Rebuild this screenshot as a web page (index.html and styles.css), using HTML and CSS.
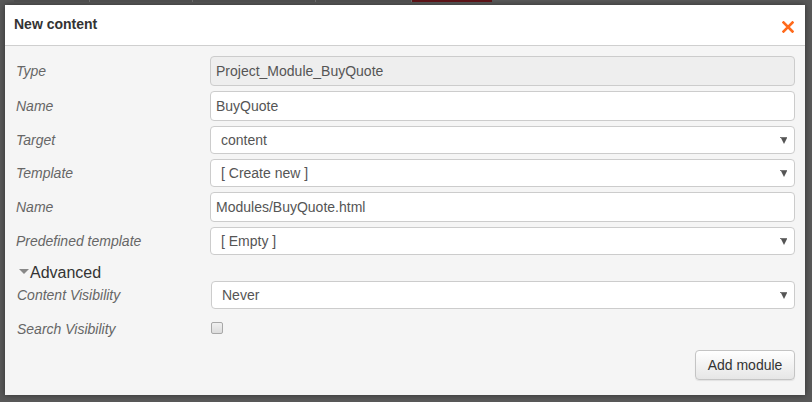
FILE: index.html
```html
<!DOCTYPE html>
<html>
<head>
<meta charset="utf-8">
<link rel="stylesheet" href="styles.css">
</head>
<body>
<div class="backdrop-strip">
  <div class="strip-tabs">
    <span class="strip-tab t1"></span><span class="strip-tab t2"></span><span class="strip-tab t3"></span><span class="strip-tab t4"></span>
  </div>
  <span class="strip-red"></span>
</div>
<div class="dialog">
  <div class="dialog-header">
    <h1 class="dialog-title">New content</h1>
    <span class="close-btn" aria-label="Close">
      <svg width="12" height="12" viewBox="0 0 12 12"><path d="M1.5 1.5 L10.5 10.5 M10.5 1.5 L1.5 10.5" stroke="#ff6a1c" stroke-width="2.6" stroke-linecap="square" fill="none"/></svg>
    </span>
  </div>
  <div class="dialog-body">
    <div class="form-grid">
      <label class="f-label">Type</label>
      <input class="f-input disabled" type="text" value="Project_Module_BuyQuote" disabled>

      <label class="f-label">Name</label>
      <input class="f-input" type="text" value="BuyQuote">

      <label class="f-label">Target</label>
      <div class="f-select"><span>content</span></div>

      <label class="f-label">Template</label>
      <div class="f-select"><span>[ Create new ]</span></div>

      <label class="f-label">Name</label>
      <input class="f-input" type="text" value="Modules/BuyQuote.html">

      <label class="f-label">Predefined template</label>
      <div class="f-select"><span>[ Empty ]</span></div>
    </div>

    <div class="advanced-toggle"><span class="adv-caret"></span>Advanced</div>

    <div class="form-grid adv-grid">
      <label class="f-label">Content Visibility</label>
      <div class="f-select"><span>Never</span></div>

      <label class="f-label search-label">Search Visibility</label>
      <div class="check-cell"><span class="f-check"></span></div>
    </div>

    <div class="dialog-footer">
      <button class="btn" type="button">Add module</button>
    </div>
  </div>
</div>
</body>
</html>
```

FILE: styles.css
```css
* { box-sizing: border-box; }
html, body { margin: 0; padding: 0; }
body {
  width: 812px;
  height: 402px;
  background: #595959;
  font-family: "Liberation Sans", Arial, Helvetica, sans-serif;
  overflow: hidden;
  position: relative;
}
.backdrop-strip {
  height: 5px;
  display: flex;
  align-items: flex-start;
}
.strip-tabs {
  display: flex;
  margin-left: 14px;
  height: 2px;
  width: 398px;
}
.strip-tab {
  height: 2px;
  background: #4d4d4d;
  border-right: 1px solid #6a6a6a;
}
.t1 { width: 76px; }
.t2 { width: 103px; }
.t3 { width: 123px; }
.t4 { width: 96px; }
.strip-red {
  display: block;
  width: 80px;
  height: 2px;
  background: #5b1216;
}
.dialog {
  margin-left: 5px;
  width: 800px;
  height: 390px;
  background: #f5f5f5;
  box-shadow: 0 0 6px rgba(0,0,0,0.45);
  display: flex;
  flex-direction: column;
}
.dialog-header {
  height: 41px;
  background: #fff;
  border-bottom: 1px solid #cfcfcf;
  display: flex;
  align-items: center;
  justify-content: space-between;
  padding: 0 11px 0 9px;
}
.dialog-title {
  margin: 0;
  font-size: 14px;
  font-weight: bold;
  color: #333;
  position: relative;
  top: -1px;
}
.close-btn {
  display: flex;
  width: 12px;
  height: 12px;
  position: relative;
  top: 2px;
}
.dialog-body {
  flex: 1;
  padding: 10px 10px 0 11px;
  display: flex;
  flex-direction: column;
}
.form-grid {
  display: grid;
  grid-template-columns: 194px 1fr;
  row-gap: 5px;
  align-items: center;
}
.f-label {
  font-size: 14px;
  font-style: italic;
  color: #666;
}
.f-input {
  height: 30px;
  width: 100%;
  border: 1px solid #cccccc;
  border-radius: 4px;
  background: #fff;
  padding: 0 5px;
  font-family: "Liberation Sans", Arial, sans-serif;
  font-size: 14px;
  color: #555;
  outline: none;
}
.f-input.disabled {
  background: #eeeeee;
  color: #555;
  -webkit-text-fill-color: #555;
  opacity: 1;
}
.f-select {
  position: relative;
  height: 28px;
  border: 1px solid #cccccc;
  border-radius: 4px;
  background: #fff;
  padding: 0 10px;
  font-size: 14px;
  color: #555;
  display: flex;
  align-items: center;
}
.f-select::after {
  content: "";
  position: absolute;
  right: 7px;
  top: 50%;
  margin-top: -2px;
  border-left: 3.5px solid transparent;
  border-right: 3.5px solid transparent;
  border-top: 6px solid #555;
}
.f-select::before {
  content: "";
  position: absolute;
  right: 7px;
  top: 50%;
  margin-top: -3px;
  width: 7px;
  height: 1px;
  background: #777;
}
.advanced-toggle {
  margin-top: 5px;
  height: 21px;
  line-height: 21px;
  font-size: 16px;
  color: #333;
  display: flex;
  align-items: center;
  padding-left: 3px;
  position: relative;
  top: 2px;
}
.adv-caret {
  width: 0;
  height: 0;
  border-left: 5px solid transparent;
  border-right: 5px solid transparent;
  border-top: 5px solid #888;
  margin-right: 1px;
  position: relative;
  top: -1px;
}
.adv-grid {
  padding-left: 1px;
  row-gap: 5px;
}
.search-label {
  height: 30px;
  display: flex;
  align-items: center;
}
.check-cell {
  height: 30px;
  padding-top: 8px;
}
.f-check {
  display: block;
  width: 12px;
  height: 12px;
  border: 1px solid #a8a8a8;
  border-radius: 2px;
  background: linear-gradient(#f0f0f0, #dcdcdc);
}
.dialog-footer {
  display: flex;
  justify-content: flex-end;
  margin-top: 6px;
  padding-right: 0;
}
.btn {
  width: 100px;
  height: 30px;
  border: 1px solid #c4c4c4;
  border-radius: 4px;
  background: linear-gradient(#ffffff, #e6e6e6);
  font-family: "Liberation Sans", Arial, sans-serif;
  font-size: 14px;
  color: #333;
  padding: 0;
  box-shadow: 0 1px 1px rgba(0,0,0,0.08);
}
```
